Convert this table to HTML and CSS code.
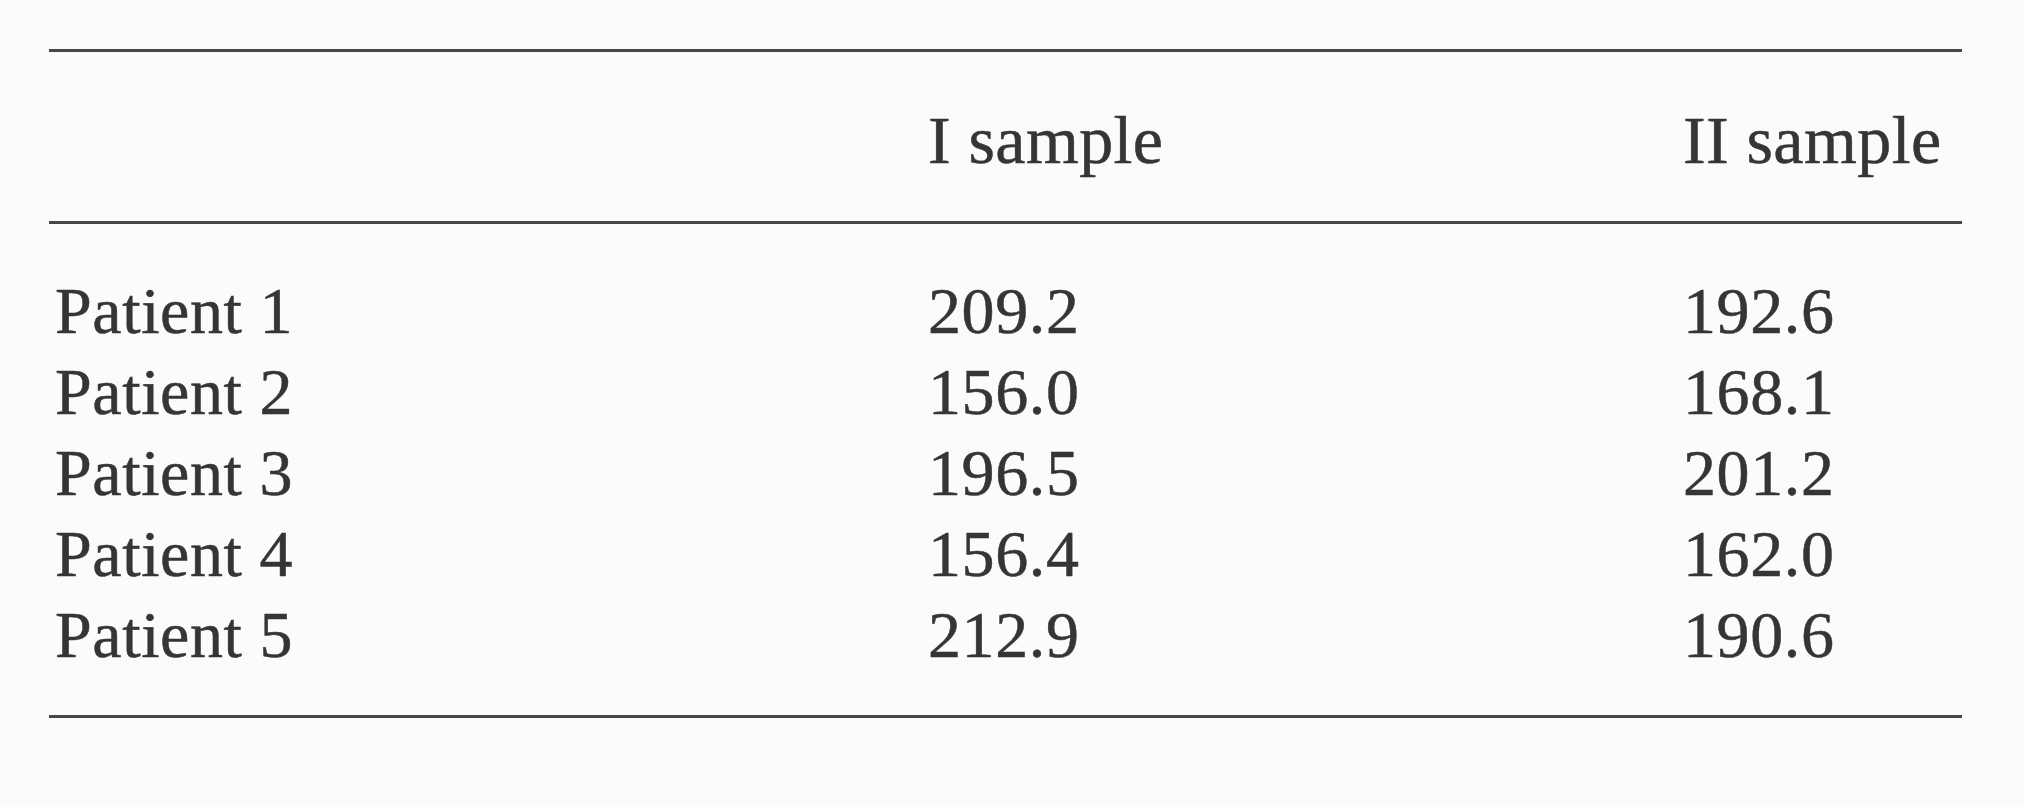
FILE: index.html
```html
<!DOCTYPE html>
<html lang="en">
<head>
<meta charset="utf-8">
<title>Samples table</title>
<link rel="stylesheet" href="styles.css">
</head>
<body>
<div class="table">
  <div class="row head">
    <div class="cell"></div>
    <div class="cell">I sample</div>
    <div class="cell">II sample</div>
  </div>
  <div class="body">
    <div class="row"><div class="cell">Patient 1</div><div class="cell">209.2</div><div class="cell">192.6</div></div>
    <div class="row"><div class="cell">Patient 2</div><div class="cell">156.0</div><div class="cell">168.1</div></div>
    <div class="row"><div class="cell">Patient 3</div><div class="cell">196.5</div><div class="cell">201.2</div></div>
    <div class="row"><div class="cell">Patient 4</div><div class="cell">156.4</div><div class="cell">162.0</div></div>
    <div class="row"><div class="cell">Patient 5</div><div class="cell">212.9</div><div class="cell">190.6</div></div>
  </div>
</div>
</body>
</html>
```
FILE: styles.css
```css
html, body {
  margin: 0;
  padding: 0;
  background: #fbfbf9;
}
body {
  font-family: "Liberation Serif", "Times New Roman", serif;
  color: #353535;
  -webkit-text-stroke: 0.5px #353535;
  width: 2024px;
  height: 806px;
  overflow: hidden;
}
.table {
  margin: 49px 0 0 49px;
  width: 1913px;
  border-top: 3px solid #474747;
  border-bottom: 3px solid #474747;
}
.row {
  display: grid;
  grid-template-columns: 873px 755px 1fr;
  padding-left: 6px;
}
.head {
  font-size: 68px;
  line-height: 80px;
  letter-spacing: 0.4px;
  padding-top: 48px;
  padding-bottom: 41px;
  border-bottom: 3px solid #474747;
}
.body {
  padding-top: 46px;
  padding-bottom: 40px;
  font-size: 66px;
  line-height: 81px;
  letter-spacing: 0.6px;
}
.cell {
  white-space: nowrap;
}
```
